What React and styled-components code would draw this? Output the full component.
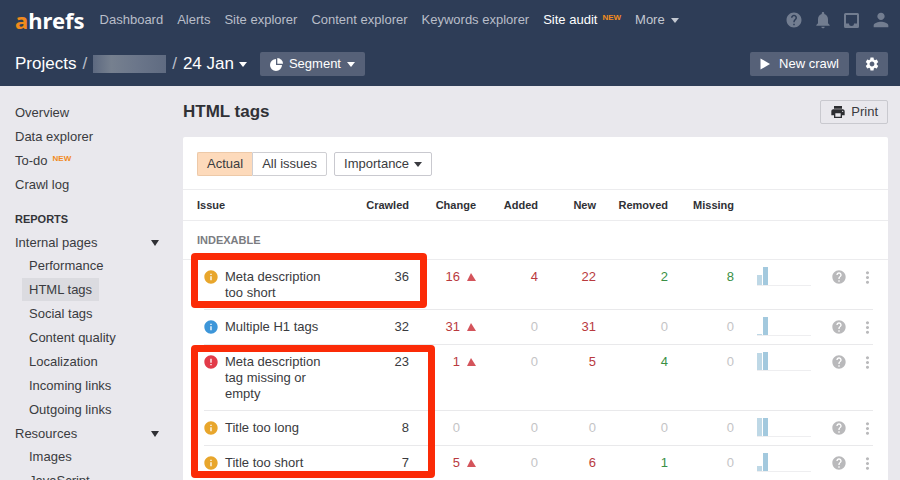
import React, { useState } from 'react'
import styled, { createGlobalStyle, css } from 'styled-components'
import { MdHelp, MdInfo, MdError, MdNotifications, MdPerson, MdPrint, MdSettings, MdMoreVert } from 'react-icons/md'

const GlobalStyle = createGlobalStyle`
*{
  box-sizing:border-box;
}
body{
  margin:0;
  background:#e9e8ed;
  color:#3a3b40;
  font-family:"Liberation Sans",Arial,sans-serif;
  font-size:13px;
  line-height:16px;
}
a{
  color:inherit;
  text-decoration:none;
}
button{
  font:inherit;
  color:inherit;
  cursor:pointer;
}
svg{
  flex:none;
}
`
const Page = styled.div`
height:100vh;
display:flex;
flex-direction:column;
overflow:hidden;
`
const Header = styled.header`
flex:none;
background:#2e3d57;
color:#fff;
padding:0 12px 0 15px;
`
const TopBar = styled.div`
display:flex;
align-items:center;
height:40px;
`
const Logo = styled.a`
font-family:"Noto Sans",sans-serif;
font-size:22px;
font-weight:700;
line-height:36px;
margin-right:15px;
span{
  color:#f08a1d;
}
`
const Nav = styled.nav`
display:flex;
flex:1;
gap:14px;
white-space:nowrap;
`
const NavLink = styled.a`
color:${({ $active }) => ($active ? '#fff' : '#b9bec9')};
&:hover{
  color:#fff;
}
`
const MoreButton = styled.button`
display:flex;
align-items:center;
gap:6px;
padding:0;
border:0;
background:none;
color:#c3c8d1;
`
const New = styled.sup`
color:#f18b1e;
font-size:8px;
font-weight:700;
line-height:8px;
margin-left:5px;
vertical-align:4px;
`
const Caret = styled.span`
border:4px solid transparent;
border-top:5px solid currentColor;
border-bottom:0;
`
const IconBar = styled.div`
display:flex;
align-items:center;
gap:14px;
color:#727d90;
`
const IconLink = styled.a`
display:flex;
justify-content:center;
width:15px;
`
const SubBar = styled.div`
display:flex;
align-items:center;
height:46px;
padding-top:2px;
`
const Crumbs = styled.div`
display:flex;
align-items:center;
gap:6px;
margin-right:13px;
font-size:17px;
line-height:20px;
i{
  font-style:normal;
  color:#b9bec9;
}
`
const Redacted = styled.span`
width:73px;
height:18px;
background:linear-gradient(90deg,#5d6980,#76808f 25%,#6b768a 60%,#5f6b81);
`
const DateButton = styled.button`
display:flex;
align-items:center;
gap:5px;
padding:0;
border:0;
background:none;
`
const HeaderButton = styled.button`
display:flex;
align-items:center;
gap:${({ $gap }) => $gap || 6}px;
height:24px;
padding:0 ${({ $square }) => ($square ? 8 : 10)}px;
border:0;
border-radius:2px;
background:#566178;
color:#fff;
`
const HeaderActions = styled.div`
display:flex;
gap:7px;
margin-left:auto;
`
const Body = styled.div`
display:flex;
flex:1;
min-height:0;
`
const Sidebar = styled.aside`
width:183px;
flex:none;
padding:15px 0 0 15px;
`
const MenuLink = styled.a`
display:block;
line-height:24px;
`
const MenuTitle = styled.h2`
margin:11px 0 1px;
font-size:11px;
line-height:22px;
color:#333439;
`
const MenuGroup = styled.button`
display:flex;
align-items:center;
justify-content:space-between;
width:144px;
height:23px;
padding:0;
border:0;
background:none;
`
const SubList = styled.ul`
list-style:none;
margin:0;
padding:0 0 0 7px;
li{
  height:24px;
}
`
const SubLink = styled.a`
display:inline-block;
padding:0 7px;
line-height:23px;
background:${({ $active }) => ($active ? '#dbdbe0' : 'none')};
`
const GroupArrow = styled.span`
border:4px solid transparent;
border-top:6px solid #2f3034;
border-bottom:0;
`
const Main = styled.main`
flex:1;
min-width:0;
padding:14px 12px 0 0;
`
const TitleRow = styled.div`
display:flex;
align-items:center;
justify-content:space-between;
height:24px;
margin-bottom:13px;
h1{
  margin:0;
  font-size:17px;
  color:#303136;
}
`
const OutlineButton = styled.button`
display:flex;
align-items:center;
gap:5px;
height:24px;
padding:0 9px;
border:1px solid #c9c9cf;
border-radius:2px;
background:${({ $plain }) => ($plain ? 'none' : '#fff')};
`
const Card = styled.section`
background:#fff;
border-radius:2px 2px 0 0;
`
const Toolbar = styled.div`
display:flex;
gap:7px;
height:53px;
padding:15px 14px 0;
border-bottom:1px solid #ececee;
`
const Segmented = styled.div`
display:flex;
`
const SegmentButton = styled.button`
height:24px;
padding:0 9px;
border:1px solid #cfcfd3;
background:#fff;
${({ $active }) => $active && css`
background:#fddabb;
border-color:#edc9a8;
`}
&:first-child{
  border-radius:2px 0 0 2px;
  border-right:0;
}
&:last-child{
  border-radius:0 2px 2px 0;
}
`
const TableWrap = styled.div`
position:relative;
`
const Table = styled.table`
width:100%;
table-layout:fixed;
border-collapse:separate;
border-spacing:0;
`
const HeadCell = styled.th`
height:31px;
padding:0;
border-bottom:1px solid #ececee;
font-size:11px;
color:#303136;
text-align:right;
&:first-child{
  padding-left:14px;
  text-align:left;
}
`
const GroupCell = styled.th`
height:39px;
padding:0 14px;
border-bottom:1px solid #ececee;
font-size:11px;
color:#7b7c81;
text-align:left;
`
const Row = styled.tr`
background:linear-gradient(#e9e9eb,#e9e9eb) 21px 100% / calc(100% - 36px) 1px no-repeat;
`
const tones = { red: '#b93a3e', green: '#3a8f45', none: '#c4c4c6' }

const Cell = styled.td`
padding:9px 0;
vertical-align:top;
text-align:right;
color:${({ $tone }) => tones[$tone] || 'inherit'};
`
const Issue = styled.div`
display:flex;
gap:6px;
padding:0 9px 0 20px;
text-align:left;
`
const Change = styled.div`
display:flex;
align-items:center;
justify-content:flex-end;
gap:7px;
`
const Up = styled.span`
border:5px solid transparent;
border-bottom:8px solid ${({ $show }) => ($show ? '#d4545b' : 'transparent')};
border-top:0;
border-left-width:4px;
`
const IconButton = styled.button`
display:flex;
align-items:center;
justify-content:${({ $center }) => ($center ? 'center' : 'flex-end')};
width:100%;
height:16px;
padding:0;
border:0;
background:none;
color:#b9b9bb;
`
const Chart = styled.div`
display:flex;
align-items:flex-end;
gap:1px;
width:54px;
height:19px;
margin:-2px 0 0 auto;
border-bottom:1px solid #eeeef0;
`
const Bar = styled.span`
width:5px;
background:${({ $last }) => ($last ? '#a3c9de' : '#bed8e6')};
`
const Mark = styled.div`
position:absolute;
left:8px;
top:${({ $top }) => $top}px;
width:${({ $width }) => $width}px;
height:${({ $height }) => $height}px;
border:7px solid #fb2b07;
border-radius:4px;
pointer-events:none;
`

const navItems = ['Dashboard', 'Alerts', 'Site explorer', 'Content explorer', 'Keywords explorer', 'Site audit']
const pages = ['Performance', 'HTML tags', 'Social tags', 'Content quality', 'Localization', 'Incoming links', 'Outgoing links']
const columns = [
  ['Issue'], ['Crawled', 76], ['Change', 67], ['Added', 62], ['New', 58], ['Removed', 72],
  ['Missing', 66], ['', 77], ['', 36], ['', 41],
]
const issues = [
  { level: 'warning', name: 'Meta description too short', crawled: 36, change: 16, added: 4, fresh: 22, removed: 2, missing: 8, bars: [10, 18] },
  { level: 'notice', name: 'Multiple H1 tags', crawled: 32, change: 31, added: 0, fresh: 31, removed: 0, missing: 0, bars: [1, 18] },
  { level: 'error', name: 'Meta description tag missing or empty', crawled: 23, change: 1, added: 0, fresh: 5, removed: 4, missing: 0, bars: [17, 18] },
  { level: 'warning', name: 'Title too long', crawled: 8, change: 0, added: 0, fresh: 0, removed: 0, missing: 0, bars: [18, 18] },
  { level: 'warning', name: 'Title too short', crawled: 7, change: 5, added: 0, fresh: 6, removed: 1, missing: 0, bars: [5, 18] },
]

const PieIcon = () => (
  <svg width="13" height="13" viewBox="0 0 13 13" fill="currentColor">
    <path d="M6 1v6h6a6 6 0 1 1-6-6z" />
    <path d="M7.300 0A5.700 5.700 0 0 1 13 5.700H7.300z" />
  </svg>
)

const PlayIcon = () => (
  <svg width="10" height="12" viewBox="0 0 10 12" fill="currentColor">
    <path d="M0.500 0.500v11L10 6z" />
  </svg>
)

const InboxIcon = () => (
  <svg width="15" height="15" viewBox="0 0 15 15" fill="currentColor">
    <path fillRule="evenodd" d="M1.500 0h12A1.500 1.500 0 0 1 15 1.500v12a1.500 1.500 0 0 1-1.500 1.500h-12A1.500 1.500 0 0 1 0 13.500v-12A1.500 1.500 0 0 1 1.500 0zM2 2v8.500h3a2.500 2.500 0 0 0 5 0h3V2z" />
  </svg>
)

const LevelIcon = ({ level }) => {
  if (level === 'error') return <MdError size={16} color="#e23b49" />
  return <MdInfo size={16} color={level === 'notice' ? '#3d96d9' : '#e8a62c'} />
}

const tone = (value, color) => (value ? color : 'none')

const IssueRow = ({ issue }) => (
  <Row>
    <Cell>
      <Issue>
        <LevelIcon level={issue.level} />
        <span>{issue.name}</span>
      </Issue>
    </Cell>
    <Cell>{issue.crawled}</Cell>
    <Cell $tone={tone(issue.change, 'red')}>
      <Change>{issue.change}<Up $show={issue.change > 0} /></Change>
    </Cell>
    <Cell $tone={tone(issue.added, 'red')}>{issue.added}</Cell>
    <Cell $tone={tone(issue.fresh, 'red')}>{issue.fresh}</Cell>
    <Cell $tone={tone(issue.removed, 'green')}>{issue.removed}</Cell>
    <Cell $tone={tone(issue.missing, 'green')}>{issue.missing}</Cell>
    <Cell>
      <Chart>
        <Bar style={{ height: issue.bars[0] }} />
        <Bar $last style={{ height: issue.bars[1] }} />
      </Chart>
    </Cell>
    <Cell><IconButton aria-label="Help"><MdHelp size={16} /></IconButton></Cell>
    <Cell><IconButton $center aria-label="Options"><MdMoreVert size={19} /></IconButton></Cell>
  </Row>
)

const App = () => {
  const [filter, setFilter] = useState('Actual')
  return (
    <Page>
      <GlobalStyle />
      <Header>
        <TopBar>
          <Logo href="#"><span>a</span>hrefs</Logo>
          <Nav>
            {navItems.map((item) => (
              <NavLink key={item} href="#" $active={item === 'Site audit'}>
                {item}
                {item === 'Site audit' && <New>NEW</New>}
              </NavLink>
            ))}
            <MoreButton>More<Caret /></MoreButton>
          </Nav>
          <IconBar>
            <IconLink href="#" aria-label="Help"><MdHelp size={18} /></IconLink>
            <IconLink href="#" aria-label="Notifications"><MdNotifications size={20} /></IconLink>
            <IconLink href="#" aria-label="Inbox"><InboxIcon /></IconLink>
            <IconLink href="#" aria-label="Account"><MdPerson size={22} /></IconLink>
          </IconBar>
        </TopBar>
        <SubBar>
          <Crumbs>
            <a href="#">Projects</a>
            <i>/</i>
            <Redacted />
            <i>/</i>
            <DateButton>24 Jan<Caret /></DateButton>
          </Crumbs>
          <HeaderButton><PieIcon />Segment<Caret /></HeaderButton>
          <HeaderActions>
            <HeaderButton $gap={9}><PlayIcon />New crawl</HeaderButton>
            <HeaderButton $square aria-label="Settings"><MdSettings size={16} /></HeaderButton>
          </HeaderActions>
        </SubBar>
      </Header>
      <Body>
        <Sidebar>
          <MenuLink href="#">Overview</MenuLink>
          <MenuLink href="#">Data explorer</MenuLink>
          <MenuLink href="#">To-do<New>NEW</New></MenuLink>
          <MenuLink href="#">Crawl log</MenuLink>
          <MenuTitle>REPORTS</MenuTitle>
          <MenuGroup>Internal pages<GroupArrow /></MenuGroup>
          <SubList>
            {pages.map((page) => (
              <li key={page}><SubLink href="#" $active={page === 'HTML tags'}>{page}</SubLink></li>
            ))}
          </SubList>
          <MenuGroup>Resources<GroupArrow /></MenuGroup>
          <SubList>
            <li><SubLink href="#">Images</SubLink></li>
            <li><SubLink href="#">JavaScript</SubLink></li>
          </SubList>
        </Sidebar>
        <Main>
          <TitleRow>
            <h1>HTML tags</h1>
            <OutlineButton $plain><MdPrint size={16} color="#2c2d31" />Print</OutlineButton>
          </TitleRow>
          <Card>
            <Toolbar>
              <Segmented>
                {['Actual', 'All issues'].map((name) => (
                  <SegmentButton key={name} $active={filter === name} onClick={() => setFilter(name)}>{name}</SegmentButton>
                ))}
              </Segmented>
              <OutlineButton>Importance<Caret /></OutlineButton>
            </Toolbar>
            <TableWrap>
              <Table>
                <colgroup>
                  {columns.map(([, width], i) => <col key={i} width={width} />)}
                </colgroup>
                <thead>
                  <tr>{columns.map(([name], i) => <HeadCell key={i}>{name}</HeadCell>)}</tr>
                </thead>
                <tbody>
                  <tr><GroupCell colSpan={columns.length}>INDEXABLE</GroupCell></tr>
                  {issues.map((issue) => <IssueRow key={issue.name} issue={issue} />)}
                </tbody>
              </Table>
              <Mark $top={63} $width={236} $height={55} />
              <Mark $top={155} $width={244} $height={133} />
            </TableWrap>
          </Card>
        </Main>
      </Body>
    </Page>
  )
}

export default App
